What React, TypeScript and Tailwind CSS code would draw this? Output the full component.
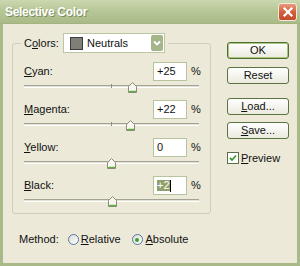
import React from 'react';

const rows = [
  { key: 'C', rest: 'yan:', value: 25, text: '+25' },
  { key: 'M', rest: 'agenta:', value: 22, text: '+22' },
  { key: 'Y', rest: 'ellow:', value: 0, text: '0' },
  { key: 'B', rest: 'lack:', value: 2, text: '+2', selected: true },
];

function Thumb() {
  return (
    <svg width="9" height="11" viewBox="0 0 9 11">
      <polygon points="0.5,4.5 4.5,0.5 8.5,4.5 8.5,10.5 0.5,10.5" fill="#f7f7f0" stroke="#8a8a7c" />
      <line x1="1" y1="9.5" x2="8" y2="9.5" stroke="#5fae3e" strokeWidth="1.5" />
      <line x1="1.5" y1="5" x2="1.5" y2="9" stroke="#ffffff" />
    </svg>
  );
}

function Slider({ value }: { value: number }) {
  // track runs 174px wide, value -100..100
  const left = 87 + (value / 100) * 87 - 4.5;
  return (
    <div className="relative h-[13px] w-full">
      <div className="absolute left-0 right-0 top-[4px] h-[3px] border-t border-[#a3a394] border-b border-b-white bg-[#e4e2d3]" />
      <div className="absolute left-[87px] top-[3px] h-[4px] w-px bg-[#8d8d80]" />
      <div className="absolute top-[1px]" style={{ left }}>
        <Thumb />
      </div>
    </div>
  );
}

function Button({ children, primary }: { children: React.ReactNode; primary?: boolean }) {
  return (
    <div
      className={
        'flex h-[17px] w-[62px] items-center justify-center rounded-[3px] border bg-gradient-to-b from-white to-[#ebeade] ' +
        (primary ? 'border-[#4f6d33] shadow-[inset_0_0_0_1px_#a9c77f]' : 'border-[#5b7440]')
      }
    >
      {children}
    </div>
  );
}

export default function App() {
  return (
    <div className="flex h-[266px] w-[300px] flex-col bg-[#ece9d8] font-['Liberation_Sans',Arial,sans-serif] text-[11px] leading-none text-[#111]">
      {/* title bar */}
      <div className="flex h-[24px] shrink-0 items-center justify-between border-b border-[#a3b47f] bg-gradient-to-b from-[#cbd8b0] via-[#b6c695] to-[#a9bb87] pl-[5px] pr-[3px]">
        <span className="text-[12px] font-bold tracking-[-0.3px] text-white [text-shadow:1px_1px_0_#7d8d5e]">
          Selective Color
        </span>
        <div className="flex h-[18px] w-[19px] items-center justify-center rounded-[3px] border border-[#f4e9df] bg-gradient-to-b from-[#e89a7a] via-[#d2603d] to-[#c24a2a]">
          <svg width="10" height="10" viewBox="0 0 10 10">
            <path d="M1.5 1.5 L8.5 8.5 M8.5 1.5 L1.5 8.5" stroke="white" strokeWidth="2.2" strokeLinecap="square" />
          </svg>
        </div>
      </div>

      <div className="flex flex-1 flex-col border-x-[3px] border-b-[3px] border-[#a8ba87]">
        <div className="flex pl-[9px] pt-[9px]">
          {/* group box */}
          <fieldset className="h-[181px] w-[199px] rounded-[3px] border border-[#cfcdbd] px-[11px] pt-[9px]">
            <legend className="-ml-[3px] flex items-center px-[3px]">
              <span className="w-[39px]">
                C<span className="underline">o</span>lors:
              </span>
              <div className="flex h-[20px] w-[102px] items-center border border-[#b9c8a2] bg-white pl-[6px] pr-[1px]">
                <div className="h-[13px] w-[13px] border border-[#3c3c38] bg-[#7f7f77]" />
                <span className="ml-[4px] flex-1">Neutrals</span>
                <div className="flex h-[16px] w-[12px] items-center justify-center rounded-[2px] bg-[#a4b68a]">
                  <svg width="8" height="6" viewBox="0 0 8 6">
                    <path d="M1 1.5 L4 4.5 L7 1.5" fill="none" stroke="white" strokeWidth="1.8" />
                  </svg>
                </div>
              </div>
            </legend>
            <div className="flex flex-col gap-[6px]">
              {rows.map((r) => (
                <div key={r.key} className="flex flex-col">
                  <div className="flex h-[19px] items-center">
                    <span className="flex-1">
                      <span className="underline">{r.key}</span>
                      {r.rest}
                    </span>
                    <div className="flex h-[19px] w-[34px] items-center border border-[#b7c59f] bg-white pl-[3px]">
                      {r.selected ? (
                        <>
                          <span className="bg-[#909f6c] text-white">{r.text}</span>
                          <span className="h-[12px] w-px bg-black" />
                        </>
                      ) : (
                        <span>{r.text}</span>
                      )}
                    </div>
                    <span className="ml-[4px] w-[8px]">%</span>
                  </div>
                  <Slider value={r.value} />
                </div>
              ))}
            </div>
          </fieldset>

          {/* buttons */}
          <div className="ml-[16px] flex flex-col pt-[9px]">
            <Button primary>OK</Button>
            <div className="mt-[8px]">
              <Button>Reset</Button>
            </div>
            <div className="mt-[14px]">
              <Button>
                <span className="underline">L</span>oad...
              </Button>
            </div>
            <div className="mt-[7px]">
              <Button>
                <span className="underline">S</span>ave...
              </Button>
            </div>
            <div className="mt-[13px] flex items-center">
              <div className="flex h-[12px] w-[12px] items-center justify-center border border-[#5b6f49] bg-white">
                <svg width="8" height="8" viewBox="0 0 8 8">
                  <path d="M1 4 L3 6 L7 1.5" fill="none" stroke="#3a9c2e" strokeWidth="1.8" />
                </svg>
              </div>
              <span className="ml-[2px]">
                <span className="underline">P</span>review
              </span>
            </div>
          </div>
        </div>

        {/* method */}
        <div className="mt-[20px] flex items-center pl-[16px]">
          <span>Method:</span>
          <div className="ml-[9px] h-[11px] w-[11px] rounded-full border border-[#5478a3] bg-gradient-to-br from-[#dcdcd4] to-white" />
          <span className="ml-[2px]">
            <span className="underline">R</span>elative
          </span>
          <div className="ml-[11px] flex h-[11px] w-[11px] items-center justify-center rounded-full border border-[#5478a3] bg-gradient-to-br from-[#dcdcd4] to-white">
            <div className="h-[4px] w-[4px] rounded-full bg-[#3aa236]" />
          </div>
          <span className="ml-[3px]">
            <span className="underline">A</span>bsolute
          </span>
        </div>
      </div>
    </div>
  );
}
